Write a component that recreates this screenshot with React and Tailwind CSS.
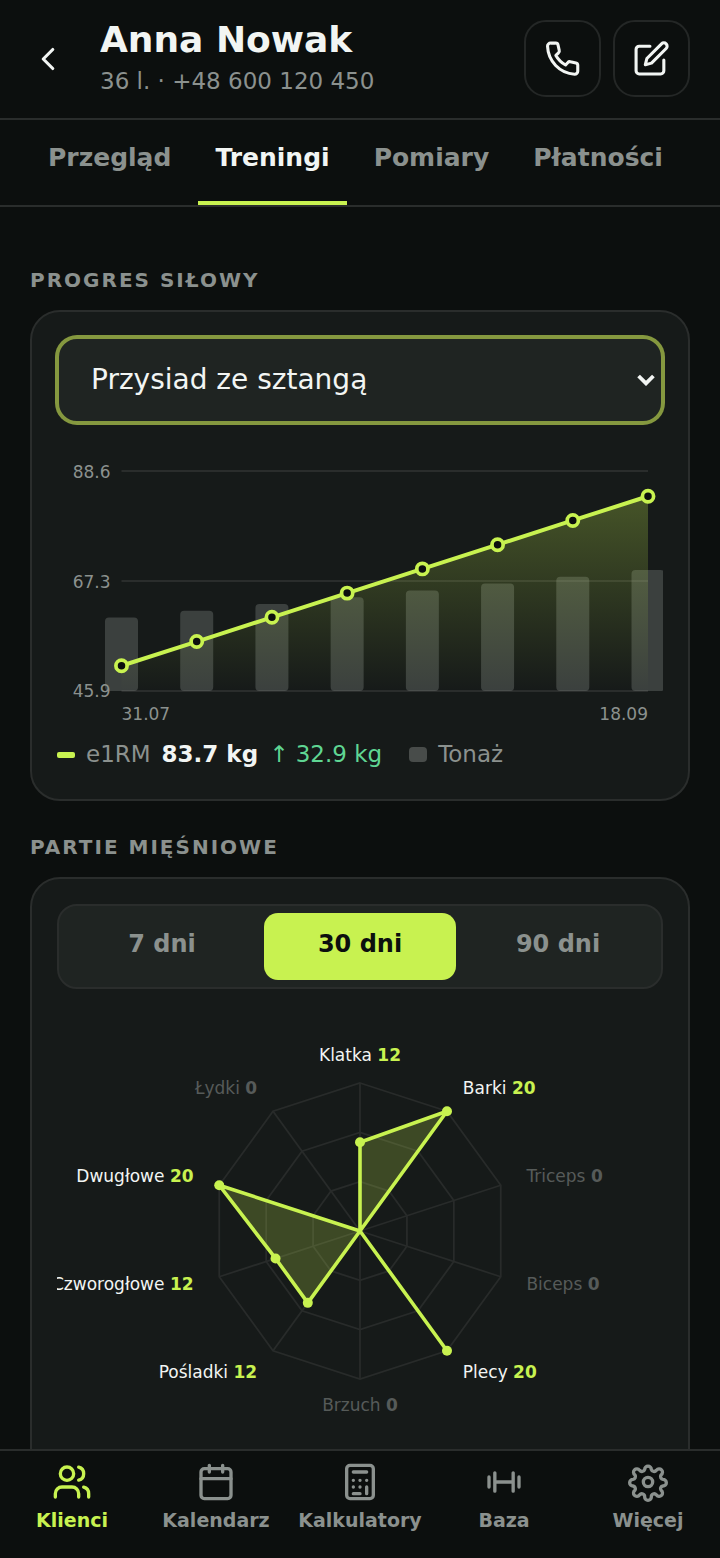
import { useState } from 'react';
import { FiChevronLeft, FiEdit } from 'react-icons/fi';

const TABS = ['Przegląd', 'Treningi', 'Pomiary', 'Płatności'];
const RANGES = ['7 dni', '30 dni', '90 dni'];
const EXERCISES = ['Przysiad ze sztangą', 'Martwy ciąg', 'Wyciskanie leżąc'];

const SESSIONS = [
  { e1rm: 50.8, volume: 1080 },
  { e1rm: 55.5, volume: 1180 },
  { e1rm: 60.2, volume: 1280 },
  { e1rm: 64.9, volume: 1380 },
  { e1rm: 69.6, volume: 1480 },
  { e1rm: 74.3, volume: 1580 },
  { e1rm: 79, volume: 1680 },
  { e1rm: 83.7, volume: 1780 },
];

const MUSCLES = [
  { name: 'Klatka', sets: 12 },
  { name: 'Barki', sets: 20 },
  { name: 'Triceps', sets: 0 },
  { name: 'Biceps', sets: 0 },
  { name: 'Plecy', sets: 20 },
  { name: 'Brzuch', sets: 0 },
  { name: 'Pośladki', sets: 12 },
  { name: 'Czworogłowe', sets: 12 },
  { name: 'Dwugłowe', sets: 20 },
  { name: 'Łydki', sets: 0 },
];

function Icon({ className = 'size-10', children }) {
  return (
    <svg
      className={className}
      viewBox="0 0 24 24"
      fill="none"
      stroke="currentColor"
      strokeWidth="2"
      strokeLinecap="round"
      strokeLinejoin="round"
      aria-hidden="true"
    >
      {children}
    </svg>
  );
}

const NAV_ITEMS = [
  {
    label: 'Klienci',
    icon: (
      <Icon>
        <path d="M16 21v-2a4 4 0 0 0-4-4H6a4 4 0 0 0-4 4v2" />
        <circle cx="9" cy="7" r="4" />
        <path d="M22 21v-2a4 4 0 0 0-3-3.87M16 3.13a4 4 0 0 1 0 7.75" />
      </Icon>
    ),
  },
  {
    label: 'Kalendarz',
    icon: (
      <Icon>
        <rect x="3" y="4" width="18" height="18" rx="2" />
        <path d="M16 2v4M8 2v4M3 10h18" />
      </Icon>
    ),
  },
  {
    label: 'Kalkulatory',
    icon: (
      <Icon>
        <rect x="4" y="2" width="16" height="20" rx="2" />
        <path d="M8 6h8M8 11h.01M12 11h.01M16 11h.01M8 15h.01M12 15h.01M16 15v4M8 19h4" />
      </Icon>
    ),
  },
  {
    label: 'Baza',
    icon: (
      <Icon>
        <path d="M6.5 6.5v11M17.5 6.5v11M3 9v6M21 9v6M6.5 12h11" />
      </Icon>
    ),
  },
  {
    label: 'Więcej',
    icon: (
      <Icon>
        <circle cx="12" cy="12" r="2.8" />
        <path d="M19.6 15.4a1.7 1.7 0 0 0 .2 1.5l.1.1a2 2 0 1 1-2.8 2.8l-.1-.1a1.7 1.7 0 0 0-3 1.2v.1a2 2 0 0 1-4 0v-.1a1.7 1.7 0 0 0-3-1.2l-.1.1A2 2 0 1 1 4.1 17l.1-.1A1.7 1.7 0 0 0 3 14.4a2 2 0 0 1 0-4 1.7 1.7 0 0 0 1.2-2.6l-.1-.1a2 2 0 1 1 2.8-2.8l.1.1a1.7 1.7 0 0 0 3-.5 2 2 0 0 1 4 0 1.7 1.7 0 0 0 3 .5l.1-.1a2 2 0 1 1 2.8 2.8l-.1.1a1.7 1.7 0 0 0 1.2 2.6 2 2 0 0 1 0 4 1.7 1.7 0 0 0-1.4 1z" />
      </Icon>
    ),
  },
];

function Header() {
  return (
    <header className="flex items-center gap-4 border-b-2 border-[#2a2d2c] pt-5 pr-[30px] pb-[21px] pl-3">
      <button aria-label="Wstecz" className="flex size-18 shrink-0 items-center justify-center">
        <FiChevronLeft className="size-[38px]" />
      </button>
      <div className="-my-1 min-w-0 flex-1">
        <h1 className="truncate text-[36px] leading-[46px] font-bold">Anna Nowak</h1>
        <p className="truncate text-[23px] leading-[37px] text-[#8b918e]">36 l. · +48 600 120 450</p>
      </div>
      <div className="flex shrink-0 gap-3">
        <a
          href="tel:+48600120450"
          aria-label="Zadzwoń"
          className="flex size-[77px] items-center justify-center rounded-[22px] border-2 border-[#242726]"
        >
          <Icon className="size-[37px]">
            <path d="M4.4 2h3.2a1.5 1.5 0 0 1 1.5 1.2l.8 3.6a1.6 1.6 0 0 1-.5 1.6L7.7 10a16.5 16.5 0 0 0 6.3 6.2l1.5-1.6a1.6 1.6 0 0 1 1.6-.5l3.6.8a1.5 1.5 0 0 1 1.2 1.5v3.8a2 2 0 0 1-2.1 2A18.8 18.8 0 0 1 2.3 4.1 2 2 0 0 1 4.4 2z" />
          </Icon>
        </a>
        <button
          aria-label="Edytuj"
          className="flex size-[77px] items-center justify-center rounded-[22px] border-2 border-[#242726]"
        >
          <FiEdit className="size-[37px]" />
        </button>
      </div>
    </header>
  );
}

function Tabs({ active, onChange }) {
  return (
    <div role="tablist" className="flex gap-2.5 border-b-2 border-[#2a2d2c] px-[31px]">
      {TABS.map((tab) => (
        <button
          key={tab}
          role="tab"
          aria-selected={tab === active}
          onClick={() => onChange(tab)}
          className={`border-b-4 px-[17px] pt-[21px] pb-[26px] text-[25px] leading-[34px] font-bold ${
            tab === active ? 'border-[#c8f250] text-[#f2f5f3]' : 'border-transparent text-[#8b918e]'
          }`}
        >
          {tab}
        </button>
      ))}
    </div>
  );
}

function SectionTitle({ children }) {
  return (
    <h2 className="mb-4 text-xl leading-7 font-bold tracking-widest text-[#8b918e] uppercase">{children}</h2>
  );
}

function Card({ children }) {
  return (
    <div className="mb-8 rounded-[30px] border-2 border-[#2a2d2c] bg-[#161a19] p-[25px]">{children}</div>
  );
}

function ProgressChart() {
  const left = 64.5;
  const right = 591;
  const top = 26;
  const bottom = 246;
  const min = 45.9;
  const max = 88.6;

  const points = SESSIONS.map((s, i) => ({
    x: left + (i * (right - left)) / (SESSIONS.length - 1),
    y: bottom - ((s.e1rm - min) / (max - min)) * (bottom - top),
    bar: (s.volume / 1780) * 121,
  }));
  const line = points.map((p) => `${p.x},${p.y}`).join(' ');

  return (
    <svg viewBox="0 0 606 284" className="mt-[22px] block h-auto w-full text-[17px]">
      <defs>
        <linearGradient id="area" x1="0" y1="0" x2="0" y2="1">
          <stop offset="0" stopColor="#c8f250" stopOpacity="0.27" />
          <stop offset="1" stopColor="#c8f250" stopOpacity="0" />
        </linearGradient>
      </defs>
      {[top, (top + bottom) / 2, bottom].map((y) => (
        <line key={y} x1={left} x2={right} y1={y} y2={y} stroke="#2a2d2c" strokeWidth="2" />
      ))}
      {points.map((p) => (
        <rect key={p.x} x={p.x - 16.5} y={bottom - p.bar} width="33" height={p.bar} rx="4" fill="#8b918e" fillOpacity="0.32" />
      ))}
      <polygon points={`${left},${bottom} ${line} ${right},${bottom}`} fill="url(#area)" />
      <polyline points={line} fill="none" stroke="#c8f250" strokeWidth="4" strokeLinejoin="round" />
      {points.map((p) => (
        <circle key={p.x} cx={p.x} cy={p.y} r="5.6" fill="#0c0f0e" stroke="#c8f250" strokeWidth="3.7" />
      ))}
      <g fill="#8b918e">
        <text x="53.5" y="33" textAnchor="end">88.6</text>
        <text x="53.5" y="143" textAnchor="end">67.3</text>
        <text x="53.5" y="252" textAnchor="end">45.9</text>
        <text x={left} y="275">31.07</text>
        <text x={right} y="275" textAnchor="end">18.09</text>
      </g>
    </svg>
  );
}

function MuscleRadar() {
  const cx = 303;
  const cy = 222;
  const radius = 148;
  const at = (i, r) => {
    const angle = (i * 2 * Math.PI) / MUSCLES.length;
    return [cx + Math.sin(angle) * r, cy - Math.cos(angle) * r];
  };
  const ring = (r) => MUSCLES.map((_, i) => at(i, r).join(',')).join(' ');
  const anchor = (x) => {
    if (Math.abs(x - cx) < 1) return 'middle';
    return x > cx ? 'start' : 'end';
  };

  return (
    <svg viewBox="0 0 606 444" className="mt-5 block h-auto w-full text-[17px]">
      <g fill="none" stroke="#282b2a" strokeWidth="1.8">
        {[1, 2, 3].map((n) => (
          <polygon key={n} points={ring((radius * n) / 3)} />
        ))}
        {MUSCLES.map((m, i) => {
          const [x, y] = at(i, radius);
          return <line key={m.name} x1={cx} y1={cy} x2={x} y2={y} />;
        })}
      </g>
      <polygon
        points={MUSCLES.map((m, i) => at(i, (m.sets / 20) * radius).join(',')).join(' ')}
        fill="#c8f250"
        fillOpacity="0.22"
        stroke="#c8f250"
        strokeWidth="3.6"
        strokeLinejoin="round"
      />
      {MUSCLES.map((m, i) => {
        if (!m.sets) return null;
        const [x, y] = at(i, (m.sets / 20) * radius);
        return <circle key={m.name} cx={x} cy={y} r="5" fill="#c8f250" />;
      })}
      {MUSCLES.map((m, i) => {
        const [x, y] = at(i, 175);
        return (
          <text key={m.name} x={x} y={y + 5} textAnchor={anchor(x)} fill={m.sets ? '#f2f5f3' : '#565b59'}>
            {m.name}{' '}
            <tspan fontWeight="700" fill={m.sets ? '#c8f250' : '#565b59'}>{m.sets}</tspan>
          </text>
        );
      })}
    </svg>
  );
}

function BottomNav() {
  return (
    <nav className="grid grid-cols-5 border-t-2 border-[#2a2d2c] pt-[11px] pb-[26px]">
      {NAV_ITEMS.map((item, i) => (
        <a
          key={item.label}
          href="#"
          className={`flex flex-col items-center gap-1.5 text-[19px] leading-6 font-bold ${
            i === 0 ? 'text-[#c8f250]' : 'text-[#8b918e]'
          }`}
        >
          {item.icon}
          <span>{item.label}</span>
        </a>
      ))}
    </nav>
  );
}

export default function App() {
  const [tab, setTab] = useState('Treningi');
  const [range, setRange] = useState('30 dni');

  return (
    <div className="flex h-screen flex-col bg-[#0c0f0e] font-['DejaVu_Sans',sans-serif] text-[#f2f5f3]">
      <Header />
      <Tabs active={tab} onChange={setTab} />

      <main className="min-h-0 flex-1 overflow-y-auto px-[30px] pt-[59px] [scrollbar-width:none]">
        <SectionTitle>Progres siłowy</SectionTitle>
        <Card>
          <div className="relative">
            <select
              aria-label="Ćwiczenie"
              className="h-[86px] w-full appearance-none rounded-[20px] border-2 border-[#85983f] bg-[#1f2422] pr-14 pl-8 text-[28px] ring-2 ring-[#85983f] outline-none"
            >
              {EXERCISES.map((name) => (
                <option key={name}>{name}</option>
              ))}
            </select>
            <svg
              className="pointer-events-none absolute top-1/2 right-2 h-3 w-[18px] -translate-y-1/2"
              viewBox="0 0 18 12"
              fill="none"
              stroke="currentColor"
              strokeWidth="3.8"
              aria-hidden="true"
            >
              <path d="M1.6 2l7.4 7.4L16.4 2" />
            </svg>
          </div>

          <ProgressChart />

          {/* Legend */}
          <div className="mt-[10px] flex items-center gap-[11px] pb-1 text-[23px] leading-[31px] text-[#8b918e]">
            <span className="h-1.5 w-[18px] rounded-xs bg-[#c8f250]" />
            <span>e1RM</span>
            <b className="text-[#f2f5f3]">83.7 kg</b>
            <span className="text-[#5fd693]">↑ 32.9 kg</span>
            <span className="ml-4 h-[15px] w-[18px] rounded-sm bg-[#484c4a]" />
            <span>Tonaż</span>
          </div>
        </Card>

        <SectionTitle>Partie mięśniowe</SectionTitle>
        <Card>
          <div className="grid grid-cols-3 gap-1.5 rounded-[20px] border-2 border-[#2a2d2c] bg-[#1f2422] p-[7px]">
            {RANGES.map((r) => (
              <button
                key={r}
                aria-pressed={r === range}
                onClick={() => setRange(r)}
                className={`rounded-[14px] pt-[15px] pb-5 text-2xl leading-8 font-bold ${
                  r === range ? 'bg-[#c8f250] text-[#0c0f0e]' : 'text-[#8b918e]'
                }`}
              >
                {r}
              </button>
            ))}
          </div>
          <MuscleRadar />
        </Card>
      </main>

      <BottomNav />
    </div>
  );
}
